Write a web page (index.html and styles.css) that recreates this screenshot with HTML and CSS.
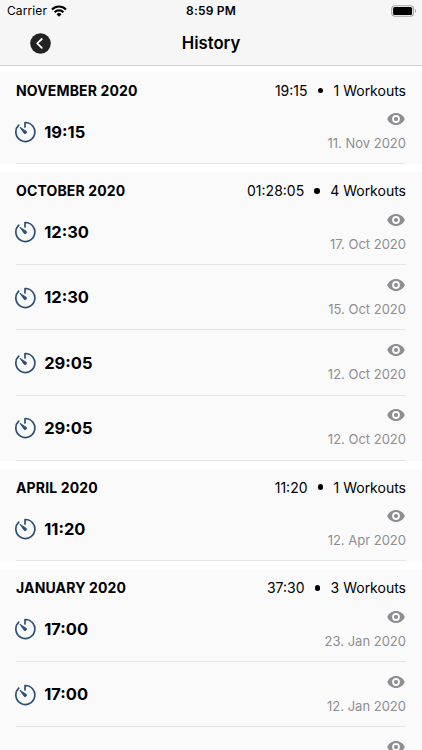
FILE: index.html
```html
<!DOCTYPE html>
<html lang="en">
<head>
    <meta charset="UTF-8">
    <meta name="viewport" content="width=device-width, initial-scale=1.0">
    <title>History</title>
    <link rel="stylesheet" href="styles.css">
</head>
<body>
    <svg class="symbols" width="0" height="0">
        <symbol id="timer" viewBox="0 0 22 22">
            <path d="M4.7 4.2A9.5 9.5 0 1 0 11 1.5V6" fill="none" stroke="#2d5078" stroke-width="1.7" stroke-linecap="round" stroke-linejoin="round"/>
            <path d="M5.9 6.2L12.2 10.2A1.5 1.5 0 0 1 10.2 12.4Z" fill="#2d5078" stroke="#2d5078" stroke-width="0.8" stroke-linejoin="round"/>
        </symbol>
        <symbol id="eye" viewBox="0 0 18 12">
            <path d="M9 0C5 0 1.7 2.4 0.2 6C1.7 9.6 5 12 9 12S16.3 9.6 17.8 6C16.3 2.4 13 0 9 0Z" fill="#8e8e93"/>
            <circle cx="9" cy="6" r="3" fill="#8e8e93" stroke="#fafafa" stroke-width="1.8"/>
            <circle cx="9" cy="6" r="1.4" fill="#8e8e93"/>
        </symbol>
    </svg>

    <header class="top">
        <div class="status-bar">
            <div class="carrier">
                <span>Carrier</span>
                <svg width="16" height="12" viewBox="0 0 16 12">
                    <g fill="none" stroke="#000" stroke-width="2.1">
                        <path d="M1 4.4a10 10 0 0 1 14 0"/>
                        <path d="M3.6 7.2a6.3 6.3 0 0 1 8.8 0"/>
                    </g>
                    <path d="M5.5 9.2a3.6 3.6 0 0 1 5 0L8 11.8z"/>
                </svg>
            </div>
            <div class="clock">8:59 PM</div>
            <div class="battery">
                <svg width="26" height="12" viewBox="0 0 26 12">
                    <rect x="0.7" y="0.7" width="21.8" height="10.6" rx="3" fill="none" stroke="#a5a5a5" stroke-width="1.1"/>
                    <rect x="2.1" y="2.1" width="19" height="7.8" rx="1.5"/>
                    <path d="M24 4.1c1.5.5 1.5 3.3 0 3.8z" fill="#a0a0a0"/>
                </svg>
            </div>
        </div>
        <div class="nav-bar">
            <button class="back" aria-label="Back">
                <svg width="21" height="21" viewBox="0 0 21 21">
                    <circle cx="10.5" cy="10.5" r="10.3" fill="#222"/>
                    <path d="M11.8 6L7.2 10.4L11.8 14.8" fill="none" stroke="#fff" stroke-width="1.8" stroke-linecap="round" stroke-linejoin="round"/>
                </svg>
            </button>
            <h1>History</h1>
        </div>
    </header>

    <main>
        <section class="month">
            <div class="month-header">
                <h2>NOVEMBER 2020</h2>
                <div class="summary"><span>19:15</span><i class="dot"></i><span>1 Workouts</span></div>
            </div>
            <div class="workout">
                <svg class="timer"><use href="#timer"/></svg>
                <span class="time">19:15</span>
                <div class="info"><svg class="eye"><use href="#eye"/></svg><span class="date">11. Nov 2020</span></div>
            </div>
        </section>

        <section class="month">
            <div class="month-header">
                <h2>OCTOBER 2020</h2>
                <div class="summary"><span>01:28:05</span><i class="dot"></i><span>4 Workouts</span></div>
            </div>
            <div class="workout">
                <svg class="timer"><use href="#timer"/></svg>
                <span class="time">12:30</span>
                <div class="info"><svg class="eye"><use href="#eye"/></svg><span class="date">17. Oct 2020</span></div>
            </div>
            <div class="workout">
                <svg class="timer"><use href="#timer"/></svg>
                <span class="time">12:30</span>
                <div class="info"><svg class="eye"><use href="#eye"/></svg><span class="date">15. Oct 2020</span></div>
            </div>
            <div class="workout">
                <svg class="timer"><use href="#timer"/></svg>
                <span class="time">29:05</span>
                <div class="info"><svg class="eye"><use href="#eye"/></svg><span class="date">12. Oct 2020</span></div>
            </div>
            <div class="workout">
                <svg class="timer"><use href="#timer"/></svg>
                <span class="time">29:05</span>
                <div class="info"><svg class="eye"><use href="#eye"/></svg><span class="date">12. Oct 2020</span></div>
            </div>
        </section>

        <section class="month">
            <div class="month-header">
                <h2>APRIL 2020</h2>
                <div class="summary"><span>11:20</span><i class="dot"></i><span>1 Workouts</span></div>
            </div>
            <div class="workout">
                <svg class="timer"><use href="#timer"/></svg>
                <span class="time">11:20</span>
                <div class="info"><svg class="eye"><use href="#eye"/></svg><span class="date">12. Apr 2020</span></div>
            </div>
        </section>

        <section class="month">
            <div class="month-header">
                <h2>JANUARY 2020</h2>
                <div class="summary"><span>37:30</span><i class="dot"></i><span>3 Workouts</span></div>
            </div>
            <div class="workout">
                <svg class="timer"><use href="#timer"/></svg>
                <span class="time">17:00</span>
                <div class="info"><svg class="eye"><use href="#eye"/></svg><span class="date">23. Jan 2020</span></div>
            </div>
            <div class="workout">
                <svg class="timer"><use href="#timer"/></svg>
                <span class="time">17:00</span>
                <div class="info"><svg class="eye"><use href="#eye"/></svg><span class="date">12. Jan 2020</span></div>
            </div>
            <div class="workout">
                <div class="info"><svg class="eye"><use href="#eye"/></svg></div>
            </div>
        </section>
    </main>
</body>
</html>
```
FILE: styles.css
```css
* {
    box-sizing: border-box;
}
body {
    font-family: Inter, "Liberation Sans", sans-serif;
    background-color: #fff;
    color: #000;
    margin: 0;
    height: 750px;
    overflow: hidden;
    display: flex;
    flex-direction: column;
}
svg {
    display: block;
}
.symbols {
    display: none;
}
.top {
    flex: none;
    height: 66px;
    background-color: #f6f6f6;
    border-bottom: 1px solid #d6d6d6;
}
.status-bar {
    display: grid;
    grid-template-columns: 1fr auto 1fr;
    align-items: center;
    height: 21px;
    padding: 0 5px 0 7px;
    font-size: 12px;
}
.carrier {
    display: flex;
    align-items: center;
    gap: 4px;
    letter-spacing: 0.1px;
}
.clock {
    margin-right: 2px;
    font-weight: 600;
    letter-spacing: 0.2px;
}
.battery {
    display: flex;
    justify-content: flex-end;
}
.nav-bar {
    display: grid;
    grid-template-columns: 1fr auto 1fr;
    align-items: center;
    height: 44px;
}
.back {
    margin-left: 30px;
    padding: 0;
    border: none;
    background: none;
    justify-self: start;
}
h1 {
    margin: 0;
    font-size: 16.7px;
    font-weight: 600;
}
main {
    flex: 1;
    min-height: 0;
    overflow: hidden;
    padding-top: 5.8px;
}
.month {
    background-color: #fafafa;
    margin-bottom: 8px;
}
.month-header {
    display: flex;
    justify-content: space-between;
    align-items: center;
    height: 27.5px;
    padding: 9.5px 16px 0;
}
h2 {
    margin: 0;
    font-size: 14px;
    font-weight: 700;
    letter-spacing: 0.15px;
}
.summary {
    display: flex;
    align-items: center;
    font-size: 14px;
}
.dot {
    width: 5.5px;
    height: 5.5px;
    margin: 0 10.5px 0 10px;
    border-radius: 50%;
    background-color: #000;
}
.workout {
    display: flex;
    align-items: center;
    height: 65.2px;
    margin: 0 16px;
    border-bottom: 1px solid #e6e6e8;
}
.timer {
    width: 22px;
    height: 22px;
    margin: 0.6px 0 0 -1.6px;
}
.time {
    margin: 0.4px 0 0 7.8px;
    font-size: 16.5px;
    font-weight: 700;
}
.info {
    display: flex;
    flex-direction: column;
    align-items: flex-end;
    align-self: flex-start;
    margin-left: auto;
    padding-top: 13.9px;
}
.eye {
    width: 18px;
    height: 12px;
    margin-right: 1px;
}
.date {
    margin-top: 8.7px;
    color: #8e8e93;
    font-size: 13px;
    line-height: 18px;
}
```
